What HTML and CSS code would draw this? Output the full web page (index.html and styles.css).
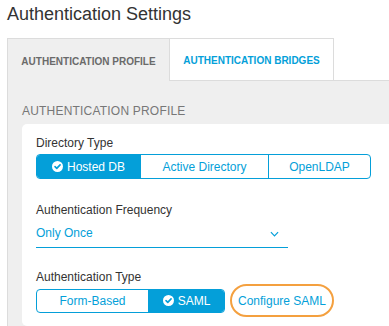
FILE: index.html
```html
<!DOCTYPE html>
<html>
<head>
<meta charset="utf-8">
<link rel="stylesheet" href="styles.css">
</head>
<body>
<h1 class="title">Authentication Settings</h1>
<div class="panel">
  <div class="tabs">
    <div class="tab tab-current">AUTHENTICATION PROFILE</div>
    <div class="tab tab-link">AUTHENTICATION BRIDGES</div>
    <div class="tab-fill"></div>
  </div>
  <div class="content">
    <div class="section-title">AUTHENTICATION PROFILE</div>
    <div class="card">
      <div class="label">Directory Type</div>
      <div class="seg seg-dir">
        <div class="seg-item on s1"><svg class="chk" viewBox="0 0 12 12"><circle cx="6" cy="6" r="6" fill="#fff"/><path d="M3.3 6.2 L5.2 8 L8.8 4.3" fill="none" stroke="#049fd9" stroke-width="1.8" stroke-linecap="round" stroke-linejoin="round"/></svg>Hosted DB</div>
        <div class="seg-item s2">Active Directory</div>
        <div class="seg-item s3">OpenLDAP</div>
      </div>
      <div class="label label-freq">Authentication Frequency</div>
      <div class="select">
        <span>Only Once</span>
        <svg class="chev" viewBox="0 0 10 6"><path d="M1 1 L5 5 L9 1" fill="none" stroke="#049fd9" stroke-width="1.3"/></svg>
      </div>
      <div class="label label-type">Authentication Type</div>
      <div class="type-row">
        <div class="seg seg-type">
          <div class="seg-item t1">Form-Based</div>
          <div class="seg-item on t2"><svg class="chk" viewBox="0 0 12 12"><circle cx="6" cy="6" r="6" fill="#fff"/><path d="M3.3 6.2 L5.2 8 L8.8 4.3" fill="none" stroke="#049fd9" stroke-width="1.8" stroke-linecap="round" stroke-linejoin="round"/></svg>SAML</div>
        </div>
        <div class="configure">Configure SAML</div>
      </div>
    </div>
  </div>
</div>
</body>
</html>
```
FILE: styles.css
```css
* { box-sizing: border-box; }
html, body { margin: 0; padding: 0; background: #fff; overflow: hidden; }
body {
  font-family: "Liberation Sans", Arial, sans-serif;
  color: #333;
  width: 389px;
  height: 326px;
}
.title {
  margin: 0;
  padding: 3px 0 0 7px;
  height: 38px;
  font-size: 18px;
  font-weight: normal;
  line-height: 22px;
  color: #333;
}
.panel {
  margin-left: 7px;
  width: 382px;
}
.tabs {
  display: flex;
  height: 43px;
}
.tab {
  font-size: 10px;
  font-weight: bold;
  display: flex;
  align-items: center;
  justify-content: center;
  padding-top: 2px;
}
.tab-current {
  width: 162px;
  background: #efefef;
  border-left: 1px solid #dcdcdc;
  border-top: 1px solid #dcdcdc;
  color: #6a6a6a;
}
.tab-link {
  width: 165px;
  background: #fff;
  border: 1px solid #dcdcdc;
  color: #049fd9;
}
.tab-fill {
  flex: 1;
  border-bottom: 1px solid #dcdcdc;
}
.content {
  background: #efefef;
  border-left: 1px solid #dcdcdc;
  padding: 23px 0 0 14px;
  height: 245px;
}
.section-title {
  font-size: 12px;
  color: #777;
  line-height: 14px;
  letter-spacing: 0.2px;
}
.card {
  margin-top: 6px;
  background: #fff;
  border-radius: 5px 0 0 5px;
  padding: 12px 0 0 14px;
  height: 202px;
}
.label {
  font-size: 12px;
  line-height: 14px;
  color: #333;
}
.seg {
  display: flex;
  border: 1px solid #049fd9;
  border-radius: 4px;
  overflow: hidden;
  font-size: 12px;
  color: #049fd9;
}
.seg-dir {
  margin-top: 4px;
  width: 335px;
  height: 25px;
}
.seg-item {
  display: flex;
  align-items: center;
  justify-content: center;
}
.seg-item + .seg-item { border-left: 1px solid #049fd9; }
.seg-item.on {
  background: #049fd9;
  color: #fff;
}
.s1 { width: 103px; }
.s2 { width: 128px; }
.s3 { flex: 1; }
.chk {
  width: 11px;
  height: 11px;
  margin-right: 4px;
}
.label-freq { margin-top: 24px; }
.select {
  margin-top: 9px;
  width: 252px;
  height: 22px;
  border-bottom: 1.5px solid #049fd9;
  display: flex;
  align-items: flex-start;
  justify-content: space-between;
  font-size: 12px;
  line-height: 14px;
  color: #049fd9;
  padding-right: 9px;
}
.chev {
  width: 9px;
  height: 6px;
  margin-top: 5px;
}
.label-type { margin-top: 22px; }
.type-row {
  margin-top: 0;
  display: flex;
  align-items: center;
  gap: 5px;
}
.seg-type {
  width: 189px;
  height: 24px;
}
.t1 { width: 111px; }
.t2 { flex: 1; }
.configure {
  width: 104px;
  height: 33px;
  border: 2px solid #f4a03f;
  border-radius: 17px;
  display: flex;
  align-items: center;
  justify-content: center;
  font-size: 12px;
  color: #049fd9;
}
```
